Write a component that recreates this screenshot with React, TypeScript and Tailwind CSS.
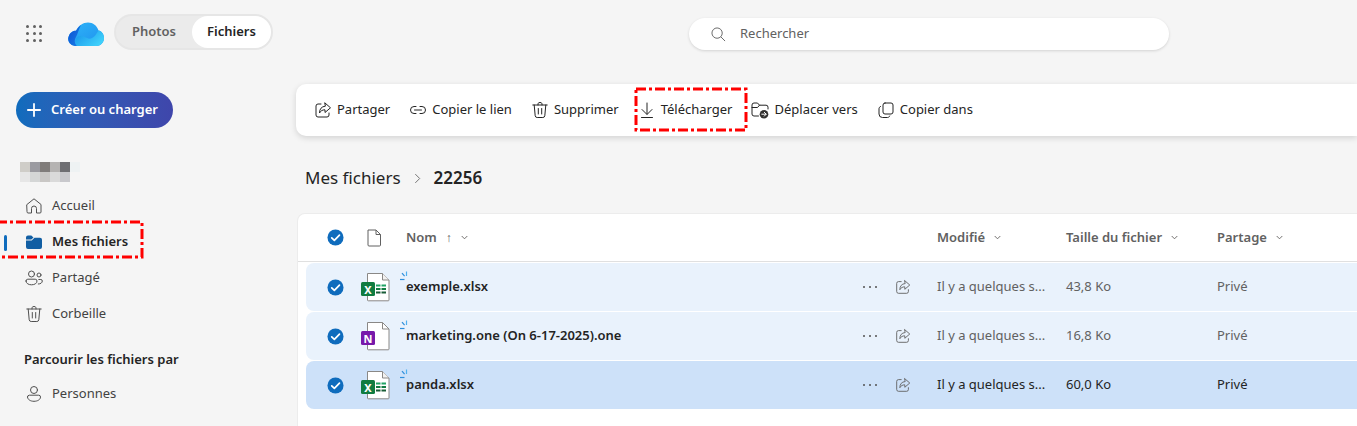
import React from "react";

const stroke = { fill: "none", stroke: "currentColor", strokeWidth: 1, strokeLinecap: "round" as const, strokeLinejoin: "round" as const };

function Ico({ children, className = "" }: { children: React.ReactNode; className?: string }) {
  return (
    <svg viewBox="0 0 20 20" className={`w-5 h-5 shrink-0 ${className}`} {...stroke}>
      {children}
    </svg>
  );
}

const ShareIcon = ({ className = "" }: { className?: string }) => (
  <Ico className={className}>
    <path d="M8 4H5a2 2 0 0 0-2 2v9a2 2 0 0 0 2 2h9a2 2 0 0 0 2-2v-2" />
    <path d="M12 3l5.500 4.800L12 12.500V9.800c-2.600 0-4.300 1-5.500 3.200 0-4 2-6.500 5.500-6.800z" />
  </Ico>
);
const LinkIcon = () => (
  <Ico>
    <path d="M8 6.500H6a3.500 3.500 0 0 0 0 7h2M12 6.500h2a3.500 3.500 0 0 1 0 7h-2M6.500 10h7" />
  </Ico>
);
const TrashIcon = () => (
  <Ico>
    <path d="M2.800 5h14.400M8 5V3.800A1.800 1.800 0 0 1 10 2.500a1.800 1.800 0 0 1 2 1.300V5M4.200 5l1 10.800A2 2 0 0 0 7.200 17.500h5.600a2 2 0 0 0 2-1.700l1-10.800M8.300 8.500v5.500M11.700 8.500v5.500" />
  </Ico>
);
const DownIcon = () => (
  <Ico>
    <path d="M10 3v11M5 9.500l5 5 5-5M4.500 17.500h11" />
  </Ico>
);
const MoveIcon = () => (
  <svg viewBox="0 0 20 20" className="w-5 h-5 shrink-0" {...stroke}>
    <path d="M8.500 16H4a2 2 0 0 1-2-2V5a2 2 0 0 1 2-2h3.500l2 2.200H16a2 2 0 0 1 2 2V9M2 7.500h5.500l2-2.300" />
    <circle cx="14" cy="14.200" r="4.300" fill="#323130" stroke="none" />
    <path d="M11.800 14.200h4.200M14.300 12.300l1.900 1.900-1.900 1.900" stroke="#fff" />
  </svg>
);
const CopyIcon = () => (
  <Ico>
    <rect x="7" y="3" width="10" height="11" rx="2" />
    <path d="M4.500 6.500C3.500 7 3 7.700 3 8.800V14a3.500 3.500 0 0 0 3.500 3.500h5c1 0 1.800-.5 2.200-1.500" />
  </Ico>
);

const Check = () => (
  <svg viewBox="0 0 18 18" className="w-[17px] h-[17px]">
    <circle cx="9" cy="9" r="8.500" fill="#0f6cbd" />
    <path d="M5 9.300l2.800 2.700L13.200 6.400" fill="none" stroke="#fff" strokeWidth="1.800" strokeLinecap="round" strokeLinejoin="round" />
  </svg>
);

const Chevron = ({ className = "" }: { className?: string }) => (
  <svg viewBox="0 0 8 5" className={`w-[7px] h-[5px] ${className}`} fill="none" stroke="#605e5c" strokeWidth="1">
    <path d="M.8.800L4 4l3.200-3.200" />
  </svg>
);

function SyncMark() {
  return (
    <svg viewBox="0 0 10 10" className="absolute left-[38px] top-[-1px] w-[10px] h-[10px]" fill="none" strokeWidth="1.200">
      <path d="M1 6.500h4.500" stroke="#2f8fdc" transform="translate(0 2)" />
      <path d="M3 2.200l2.600 3" stroke="#2f8fdc" />
      <path d="M7.500 .5v4.500" stroke="#4fb0ee" />
    </svg>
  );
}

function FileIcon({ kind }: { kind: "x" | "n" }) {
  return (
    <div className="relative w-[30px] h-[30px]">
      <svg viewBox="0 0 30 30" className="absolute inset-0 w-[30px] h-[30px]" fill="none">
        <path d="M6.500 1.500h15l6.500 6.500v20a.8.800 0 0 1-.8.800H7.300a.8.800 0 0 1-.8-.8z" fill="#fff" stroke="#8a8886" />
        <path d="M21.500 1.500v6.500h6.500" stroke="#8a8886" fill={kind === "x" ? "#f3f2f1" : "none"} />
        {kind === "x" && (
          <g>
            <rect x="15" y="12.500" width="4.500" height="2" fill="#21a366" />
            <rect x="20.500" y="12.500" width="4.500" height="2" fill="#21a366" />
            <rect x="15" y="16" width="4.500" height="2" fill="#107c41" />
            <rect x="20.500" y="16" width="4.500" height="2" fill="#107c41" />
            <rect x="15" y="19.500" width="4.500" height="2" fill="#185c37" />
            <rect x="20.500" y="19.500" width="4.500" height="2" fill="#185c37" />
          </g>
        )}
      </svg>
      <div
        className={`absolute left-0 top-[10px] w-[14px] h-[14px] rounded-[1.5px] flex items-center justify-center text-white text-[11px] font-bold leading-none ${kind === "x" ? "bg-[#107c41]" : "bg-[#7719aa]"}`}
      >
        {kind === "x" ? "X" : "N"}
      </div>
      <SyncMark />
    </div>
  );
}

const GRID = "grid grid-cols-[55px_45px_450px_81px_129px_151px_141px] items-center";

const rows = [
  { kind: "x" as const, name: "exemple.xlsx", size: "43,8 Ko", sel: false },
  { kind: "n" as const, name: "marketing.one (On 6-17-2025).one", size: "16,8 Ko", sel: false },
  { kind: "x" as const, name: "panda.xlsx", size: "60,0 Ko", sel: true },
];

function Row({ r }: { r: (typeof rows)[number] }) {
  const tone = r.sel ? "text-[#242424]" : "text-[#616161]";
  return (
    <div className={`${GRID} h-12 ml-2 rounded-l-lg mb-px ${r.sel ? "bg-[#cde1f9]" : "bg-[#e9f2fc]"}`}>
      <div className="pl-[21px]"><Check /></div>
      <FileIcon kind={r.kind} />
      <div className="text-[13px] font-semibold text-[#242424]">{r.name}</div>
      <div className="flex items-center text-[#616161]">
        <div className="flex gap-[2px] ml-[7px]">
          <span className="w-[2px] h-[2px] rounded-full bg-[#505050]" />
          <span className="w-[2px] h-[2px] rounded-full bg-[#505050] ml-[2px]" />
          <span className="w-[2px] h-[2px] rounded-full bg-[#505050] ml-[2px]" />
        </div>
        <ShareIcon className="ml-[17px] w-[18px] h-[18px]" />
      </div>
      <div className={`text-[13px] ${tone}`}>Il y a quelques s...</div>
      <div className={`text-[13px] ${tone}`}>{r.size}</div>
      <div className={`text-[13px] ${tone}`}>Privé</div>
    </div>
  );
}

const ToolBtn = ({ icon, label, className = "" }: { icon: React.ReactNode; label: string; className?: string }) => (
  <div className={`flex items-center gap-[4px] text-[13px] text-[#242424] ${className}`}>
    {icon}
    <span>{label}</span>
  </div>
);

function NavItem({ icon, label, active }: { icon: React.ReactNode; label: string; active?: boolean }) {
  return (
    <div className={`relative h-9 pl-6 flex items-center gap-[8px] text-[13px] ${active ? "font-semibold text-[#242424]" : "text-[#424242]"}`}>
      {active && <span className="absolute left-1 top-[11px] w-[3px] h-[16px] rounded-sm bg-[#0f6cbd]" />}
      {icon}
      <span>{label}</span>
    </div>
  );
}

const Squares = ({ colors }: { colors: string[] }) => (
  <div className="flex">
    {colors.map((c, i) => (
      <span key={i} className="w-[10px] h-[10px]" style={{ backgroundColor: c }} />
    ))}
  </div>
);

export default function App() {
  return (
    <div className="relative w-full h-[426px] overflow-hidden bg-[#f5f5f5] text-[#242424] font-['Noto_Sans',sans-serif]">
      {/* top bar */}
      <div className="relative h-[66px] flex items-start">
        <div className="grid grid-cols-3 gap-[4px] w-4 ml-[26px] mt-[25px]">
          {Array.from({ length: 9 }).map((_, i) => (
            <span key={i} className="w-[3px] h-[3px] rounded-full bg-[#616161]" />
          ))}
        </div>
        <svg viewBox="0 0 36 24" className="w-9 h-6 ml-[26px] mt-[22px]">
          <defs>
            <linearGradient id="cloudA" x1="0" y1="0" x2="1" y2="1">
              <stop offset="0" stopColor="#0b4fd0" />
              <stop offset="1" stopColor="#1a7fe8" />
            </linearGradient>
            <linearGradient id="cloudB" x1="0" y1="0" x2="1" y2="1">
              <stop offset="0" stopColor="#2fb6f8" />
              <stop offset="1" stopColor="#1e8fee" />
            </linearGradient>
            <linearGradient id="cloudC" x1="0" y1="0" x2="1" y2="0.6">
              <stop offset="0" stopColor="#1490ea" />
              <stop offset="1" stopColor="#3fd0fa" />
            </linearGradient>
          </defs>
          <path d="M7 24a7 7 0 0 1-6.500-9C1.800 10.500 5 8.800 8 8.800 10.500 3.500 15 .500 20 .500c5 0 9 3 10.500 8 3 .5 5.500 3.500 5.500 7.500 0 4.500-3.500 8-8 8z" fill="url(#cloudB)" />
          <path d="M7 24a7 7 0 0 1-6.500-9C1.800 10.500 5 8.800 8 8.800 9.500 6 11 4.500 13 3c-2.500 4-3 9-5.500 13-1.300 2.500-1 5.500 1.500 8z" fill="url(#cloudA)" />
          <path d="M9 24c-2-2-2.500-5-1-7.500 2-3 5-3.500 8-2 4 2 5 2.800 8 1.500 3-1.300 4-3.800 6.500-7.500 3 .5 5.500 3.500 5.500 7.500 0 4.500-3.500 8-8 8z" fill="url(#cloudC)" />
        </svg>
        <div className="ml-[10px] mt-[14px] w-[159px] h-9 rounded-full bg-[#ebebeb] border-2 border-[#e6e6e6] flex items-center text-[13px] font-semibold">
          <span className="w-[76px] text-center text-[#616161]">Photos</span>
          <span className="w-[79px] h-[32px] rounded-full bg-white flex items-center justify-center text-[#242424]">Fichiers</span>
        </div>
        <div className="ml-[416px] mt-[18px] w-[480px] h-8 rounded-full bg-white shadow-[0_1px_3px_rgba(0,0,0,0.14)] flex items-center text-[13px] text-[#616161]">
          <svg viewBox="0 0 16 16" className="w-[15px] h-[15px] ml-[22px] mr-[14px]" fill="none" stroke="#616161" strokeWidth="1">
            <circle cx="6.500" cy="6.500" r="5.500" />
            <path d="M10.500 10.500L15 15" />
          </svg>
          Rechercher
        </div>
      </div>

      <div className="flex">
        {/* sidebar */}
        <aside className="w-[296px] shrink-0">
          <div className="ml-4 mt-[26px] w-[157px] h-9 rounded-full bg-gradient-to-r from-[#0f6cbd] to-[#3f46ab] flex items-center text-white text-[13px] font-semibold">
            <svg viewBox="0 0 14 14" className="w-[14px] h-[14px] ml-[11px] mr-[10px]" fill="none" stroke="#fff" strokeWidth="1.800" strokeLinecap="round">
              <path d="M7 .9v12.200M.9 7h12.200" />
            </svg>
            Créer ou charger
          </div>
          <div className="ml-5 mt-[34px]">
            <Squares colors={["#cfcdc8", "#9a9aa0", "#807c7a", "#b5b3b2", "#6e6e72", "#eef2f3"]} />
            <Squares colors={["#e6e6e6", "#d4d6d6", "#c9c7c5", "#dadada", "#c8c8cc"]} />
          </div>
          <div className="mt-[6px]">
            <NavItem
              label="Accueil"
              icon={
                <Ico className="text-[#505050]">
                  <path d="M3 8.500L10 2.800l7 5.700V16a1 1 0 0 1-1 1h-3.500v-4.500a2.500 2.500 0 0 0-5 0V17H4a1 1 0 0 1-1-1z" />
                </Ico>
              }
            />
            <NavItem
              active
              label="Mes fichiers"
              icon={
                <svg viewBox="0 0 20 20" className="w-5 h-5 shrink-0">
                  <path d="M2 5.500A2 2 0 0 1 4 3.500h3.300l2.200 2L7.300 7.500H2z M2 8.500h5.700l2.800-2.800H16a2 2 0 0 1 2 2V15a2 2 0 0 1-2 2H4a2 2 0 0 1-2-2z" fill="#115ea3" />
                </svg>
              }
            />
            <NavItem
              label="Partagé"
              icon={
                <Ico className="text-[#505050]">
                  <circle cx="7.500" cy="6" r="3" />
                  <path d="M2 13a1.800 1.800 0 0 1 1.800-1.800h7.400A1.800 1.800 0 0 1 13 13c0 2.500-2.500 3.800-5.500 3.800S2 15.500 2 13z" />
                  <circle cx="15" cy="7" r="2" />
                  <path d="M14.800 11.500h2a1.500 1.500 0 0 1 1.500 1.500c0 1.800-1.700 3-4 3" />
                </Ico>
              }
            />
            <NavItem label="Corbeille" icon={<span className="text-[#505050]"><TrashIcon /></span>} />
          </div>
          <div className="ml-6 mt-[18px] text-[13px] font-semibold text-[#242424] h-[18px] leading-[18px]">Parcourir les fichiers par</div>
          <div className="mt-[8px]">
            <NavItem
              label="Personnes"
              icon={
                <Ico className="text-[#505050]">
                  <circle cx="10" cy="6" r="3.500" />
                  <path d="M3.500 13a1.800 1.800 0 0 1 1.800-1.800h9.400a1.800 1.800 0 0 1 1.800 1.800c0 2.600-3 4.300-6.500 4.300S3.500 15.600 3.500 13z" />
                </Ico>
              }
            />
          </div>
        </aside>

        {/* main */}
        <main className="flex-1 min-w-0">
          <div className="mt-[18px] h-[52px] bg-white rounded-l-[10px] shadow-[0_2px_6px_rgba(0,0,0,0.14)] flex items-center pl-[17px]">
            <ToolBtn icon={<ShareIcon />} label="Partager" />
            <ToolBtn icon={<LinkIcon />} label="Copier le lien" className="ml-[18px]" />
            <ToolBtn icon={<TrashIcon />} label="Supprimer" className="ml-[18px]" />
            <ToolBtn icon={<DownIcon />} label="Télécharger" className="ml-[18px]" />
            <ToolBtn icon={<MoveIcon />} label="Déplacer vers" className="ml-[18px]" />
            <ToolBtn icon={<CopyIcon />} label="Copier dans" className="ml-[18px]" />
          </div>
          <div className="mt-[30px] h-6 pl-[9px] flex items-center text-[17px] text-[#242424]">
            <span>Mes fichiers</span>
            <svg viewBox="0 0 8 12" className="w-[7px] h-[11px] mx-[13px]" fill="none" stroke="#616161" strokeWidth="1">
              <path d="M1.500 1l5 5-5 5" />
            </svg>
            <span className="font-semibold">22256</span>
          </div>
          <div className="mt-[23px] ml-px bg-white rounded-tl-lg h-[300px] border-t border-l border-[#ececec]">
            <div className={`${GRID} h-12 pl-2 border-b border-[#e0e0e0] text-[13px] font-semibold text-[#616161]`}>
              <div className="pl-[21px]"><Check /></div>
              <svg viewBox="0 0 16 18" className="w-[16px] h-[18px] ml-[5px]" fill="none" stroke="#616161" strokeWidth="1">
                <path d="M2 1h8l4.500 4.500V16a1 1 0 0 1-1 1H3a1 1 0 0 1-1-1z M10 1v4.500h4.500" />
              </svg>
              <div className="flex items-center gap-[9px]">
                <span>Nom</span>
                <span className="font-normal text-[12px]">↑</span>
                <Chevron />
              </div>
              <div />
              <div className="flex items-center gap-[9px]"><span>Modifié</span><Chevron /></div>
              <div className="flex items-center gap-[9px]"><span>Taille du fichier</span><Chevron /></div>
              <div className="flex items-center gap-[9px]"><span>Partage</span><Chevron /></div>
            </div>
            <div className="pt-px">
              {rows.map((r) => (
                <Row key={r.name} r={r} />
              ))}
            </div>
          </div>
        </main>
      </div>

      {/* red annotation boxes drawn over the page */}
      <svg className="absolute inset-0 w-full h-full pointer-events-none" fill="none" stroke="#ff0000" strokeWidth="3" strokeDasharray="10 3 3 3">
        <rect x="636" y="89" width="110" height="41" />
        <rect x="-3" y="222" width="145" height="35" />
      </svg>
    </div>
  );
}
